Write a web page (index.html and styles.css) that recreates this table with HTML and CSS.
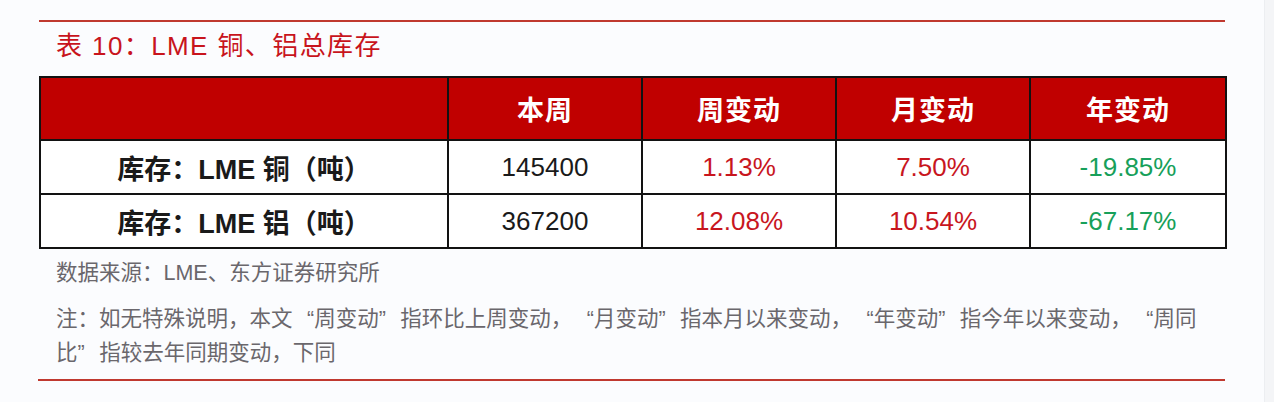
FILE: index.html
```html
<!DOCTYPE html>
<html lang="zh-CN">
<head>
<meta charset="utf-8">
<title>表 10：LME 铜、铝总库存</title>
<link rel="stylesheet" href="styles.css">
</head>
<body>
<div class="sheet">
  <div class="figure">
    <div class="rule"></div>
    <h1 class="title">表 10：LME 铜、铝总库存</h1>
    <table class="data">
      <colgroup>
        <col class="c-label"><col class="c-num"><col class="c-num"><col class="c-num"><col class="c-last">
      </colgroup>
      <thead>
        <tr>
          <th></th>
          <th>本周</th>
          <th>周变动</th>
          <th>月变动</th>
          <th>年变动</th>
        </tr>
      </thead>
      <tbody>
        <tr>
          <td class="label">库存：LME 铜（吨）</td>
          <td>145400</td>
          <td class="up">1.13%</td>
          <td class="up">7.50%</td>
          <td class="down">-19.85%</td>
        </tr>
        <tr>
          <td class="label">库存：LME 铝（吨）</td>
          <td>367200</td>
          <td class="up">12.08%</td>
          <td class="up">10.54%</td>
          <td class="down">-67.17%</td>
        </tr>
      </tbody>
    </table>
    <p class="source">数据来源：LME、东方证券研究所</p>
    <p class="note">注：如无特殊说明，本文 “周变动” 指环比上周变动， “月变动” 指本月以来变动， “年变动” 指今年以来变动， “周同比” 指较去年同期变动，下同</p>
    <div class="rule bottom"></div>
  </div>
</div>
</body>
</html>
```
FILE: styles.css
```css
html, body {
  margin: 0;
  padding: 0;
  background: #f4f5f7;
}

.sheet {
  width: 1265px;
  height: 402px;
  background: #fbfcfe;
  border-right: 1px solid #eceef1;
  box-sizing: border-box;
  padding-top: 20px;
}

.figure {
  width: 1186px;
  margin-left: 39px;
}

.rule {
  height: 2px;
  background: #c0392f;
}

.title {
  margin: 0;
  padding: 8px 0 0 17px;
  height: 54px;
  box-sizing: border-box;
  font-family: "Liberation Sans", "Noto Sans CJK SC", sans-serif;
  font-weight: normal;
  font-size: 26px;
  letter-spacing: 1.4px;
  line-height: 32px;
  color: #c8141c;
}

.data {
  width: 1186px;
  border-collapse: collapse;
  table-layout: fixed;
  font-family: "Liberation Sans", "Noto Sans CJK SC", sans-serif;
  font-size: 26px;
}

.c-label { width: 408px; }
.c-num { width: 194px; }
.c-last { width: 196px; }

.data th,
.data td {
  border: 2px solid #121212;
  text-align: center;
  padding: 0;
}

.data th {
  background: #c00000;
  color: #ffffff;
  font-weight: bold;
  height: 61px;
  font-family: "Noto Sans CJK SC", sans-serif;
  font-size: 27px;
  letter-spacing: 1px;
}

.data td {
  background: #ffffff;
  color: #1a1a1a;
  height: 52px;
}

.data td.label {
  font-weight: bold;
  font-size: 27px;
}

.data td.up { color: #c8161e; }
.data td.down { color: #17a05a; }

.source,
.note {
  margin: 0;
  padding-left: 17px;
  font-family: "Liberation Sans", "Noto Sans CJK SC", sans-serif;
  font-size: 21.5px;
  line-height: 34px;
  color: #6a676c;
}

.source { margin-top: 7px; }
.note {
  margin-top: 12px;
  width: 1150px;
  word-spacing: 8.5px;
}

.rule.bottom {
  margin-top: 9px;
  margin-left: -1px;
}
```
